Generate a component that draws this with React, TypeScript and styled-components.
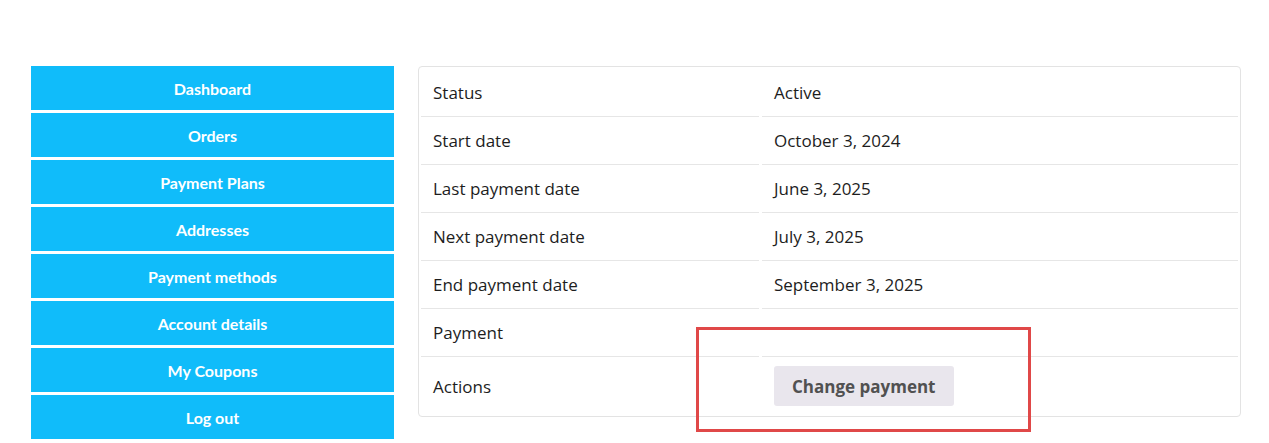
import styled, { createGlobalStyle } from 'styled-components';

const GlobalStyle = createGlobalStyle`
  body {
    margin: 0;
    background: #fff;
    font-family: 'Open Sans', 'Noto Sans', sans-serif;
  }
`;

const menu = [
  'Dashboard',
  'Orders',
  'Payment Plans',
  'Addresses',
  'Payment methods',
  'Account details',
  'My Coupons',
  'Log out',
];

const rows = [
  ['Status', 'Active'],
  ['Start date', 'October 3, 2024'],
  ['Last payment date', 'June 3, 2025'],
  ['Next payment date', 'July 3, 2025'],
  ['End payment date', 'September 3, 2025'],
  ['Payment', ''],
];

function App() {
  return (
    <>
      <GlobalStyle />
      <Page>
        <Nav>
          {menu.map((item) => (
            <NavItem key={item}>{item}</NavItem>
          ))}
        </Nav>
        <Card>
          <Grid>
            {rows.map(([label, value]) => (
              <Row key={label}>
                <Cell>{label}</Cell>
                <Cell>{value}</Cell>
              </Row>
            ))}
            <Row>
              <Cell last>Actions</Cell>
              <Cell last>
                <Button>Change payment</Button>
              </Cell>
            </Row>
          </Grid>
          <Highlight />
        </Card>
      </Page>
    </>
  );
}

export default App;

const Page = styled.div`
  display: flex;
  align-items: flex-start;
  gap: 24px;
  padding: 66px 0 0 31px;
`;

const Nav = styled.nav`
  width: 363px;
  display: flex;
  flex-direction: column;
  gap: 3px;
`;

const NavItem = styled.a`
  height: 44px;
  display: flex;
  align-items: center;
  justify-content: center;
  background-color: #10bcfa;
  color: #fff;
  font-family: 'Lato', sans-serif;
  font-weight: 700;
  font-size: 16px;
  cursor: pointer;
`;

const Card = styled.div`
  position: relative;
  width: 823px;
  box-sizing: border-box;
  border: 1px solid #e3e3e3;
  border-radius: 4px;
  padding: 2px 2px 0;
`;

const Grid = styled.div`
  display: grid;
  grid-template-columns: 338px 1fr;
  column-gap: 3px;
`;

const Row = styled.div`
  display: contents;
`;

const Cell = styled.div<{ last?: boolean }>`
  display: flex;
  align-items: center;
  box-sizing: border-box;
  min-height: 48px;
  padding: ${({ last }) => (last ? '9px 12px 10px' : '0 12px')};
  border-bottom: ${({ last }) => (last ? 'none' : '1px solid #e6e6e6')};
  font-size: 17px;
  color: #1d1d1d;
`;

const Button = styled.button`
  height: 40px;
  padding: 0 18px;
  border: none;
  border-radius: 3px;
  background-color: #e9e6ed;
  color: #515151;
  font-family: 'Open Sans', sans-serif;
  font-weight: 700;
  font-size: 17px;
  cursor: pointer;
`;

const Highlight = styled.div`
  position: absolute;
  left: 277px;
  top: 260px;
  width: 335px;
  height: 105px;
  box-sizing: border-box;
  border: 3px solid #e04848;
  pointer-events: none;
`;
